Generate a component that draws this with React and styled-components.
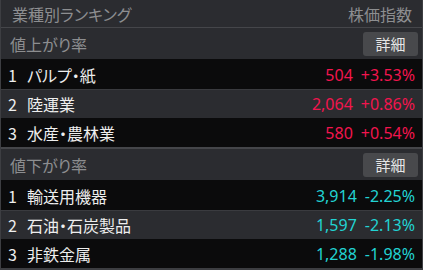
import React from "react";
import styled, { createGlobalStyle } from "styled-components";

const Global = createGlobalStyle`
  html, body { margin: 0; padding: 0; background: #2b2c30; }
  body {
    font-family: "Noto Sans CJK JP", "Noto Sans", sans-serif;
    font-feature-settings: "palt";
  }
`;

const Panel = styled.div`
  width: 423px;
  height: 270px;
  box-sizing: border-box;
  background: #2b2c30;
  border-left: 1px solid #3d3e42;
  border-right: 1px solid #3d3e42;
  border-bottom: 2px solid #3d3e42;
  display: flex;
  flex-direction: column;
`;

const TopBar = styled.div`
  height: 27px;
  display: flex;
  align-items: center;
  justify-content: space-between;
  padding: 0 10px 0 11px;
  color: #8d8e90;
  font-size: 16px;
  border-bottom: 1px solid #45464a;
`;

const SectionHead = styled.div`
  height: ${(p) => p.$h}px;
  display: flex;
  align-items: center;
  justify-content: space-between;
  padding: 0 4px 0 9px;
  color: #8d8e90;
  font-size: 16px;
  ${(p) => (p.$top ? "border-top: 2px solid #45464a;" : "")}
`;

const DetailButton = styled.button`
  width: 55px;
  height: 24px;
  border: none;
  border-radius: 3px;
  background: #48494c;
  color: #e6e6e6;
  font-family: inherit;
  font-size: 15px;
  padding: 0;
  line-height: 24px;
`;

const Row = styled.div`
  height: ${(p) => p.$h || 29}px;
  display: flex;
  align-items: center;
  justify-content: space-between;
  padding: 0 7px 0 7px;
  background: ${(p) => (p.$dark ? "#0b0b0c" : "#2b2c30")};
  color: #eeeeee;
  font-size: 16px;
  border-top: 1px solid ${(p) => (p.$dark ? "#0b0b0c" : "#3a3b3f")};
  box-sizing: border-box;
`;

const Name = styled.span`
  display: flex;
  gap: 10px;
`;

const Values = styled.span`
  display: flex;
  gap: 8px;
  font-size: 16px;
  color: ${(p) => (p.$up ? "#f2154e" : "#22d3d3")};
  font-family: "Noto Sans", "Noto Sans CJK JP", sans-serif;
`;

const up = [
  ["パルプ・紙", "504", "+3.53%"],
  ["陸運業", "2,064", "+0.86%"],
  ["水産・農林業", "580", "+0.54%"],
];
const down = [
  ["輸送用機器", "3,914", "-2.25%"],
  ["石油・石炭製品", "1,597", "-2.13%"],
  ["非鉄金属", "1,288", "-1.98%"],
];

function Rows({ items, isUp }) {
  return items.map(([name, price, pct], i) => (
    <Row key={name} $dark={i !== 1} $h={i === 0 ? 30 : 29}>
      <Name>
        <span>{i + 1}</span>
        <span>{name}</span>
      </Name>
      <Values $up={isUp}>
        <span>{price}</span>
        <span>{pct}</span>
      </Values>
    </Row>
  ));
}

export default function App() {
  return (
    <>
      <Global />
      <Panel>
        <TopBar>
          <span>業種別ランキング</span>
          <span>株価指数</span>
        </TopBar>
        <SectionHead $h={31}>
          <span>値上がり率</span>
          <DetailButton>詳細</DetailButton>
        </SectionHead>
        <Rows items={up} isUp />
        <SectionHead $h={31} $top>
          <span>値下がり率</span>
          <DetailButton>詳細</DetailButton>
        </SectionHead>
        <Rows items={down} />
      </Panel>
    </>
  );
}
